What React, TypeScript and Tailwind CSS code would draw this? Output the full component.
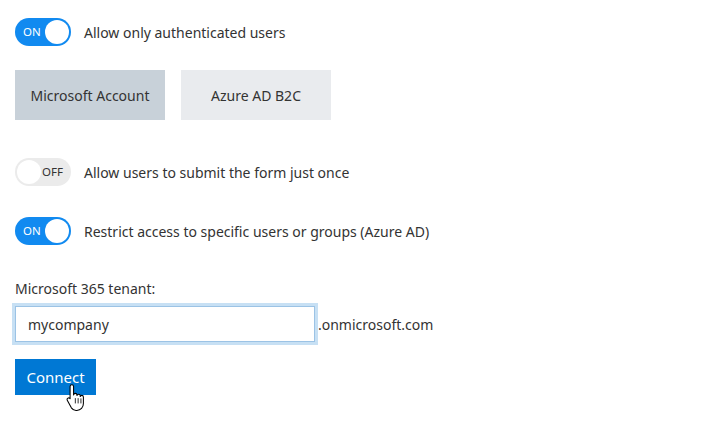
import React from 'react';

const font = { fontFamily: '"Segoe UI", "Noto Sans", "Open Sans", sans-serif' };

const Toggle = ({ on }: { on: boolean }) =>
    on ? (
        <div className="w-[56px] h-[28px] rounded-full bg-[#118af0] flex items-center justify-between pl-[8px] pr-[2px] shrink-0">
            <span className="text-[11.5px] text-white leading-none">ON</span>
            <span className="w-[24px] h-[24px] rounded-full bg-white"></span>
        </div>
    ) : (
        <div className="w-[56px] h-[28px] rounded-full bg-[#ebebeb] flex items-center justify-between pl-[2px] pr-[8px] shrink-0">
            <span className="w-[24px] h-[24px] rounded-full bg-white"></span>
            <span className="text-[11.5px] text-[#333] leading-none">OFF</span>
        </div>
    );

const Row = ({ on, label }: { on: boolean; label: string }) => (
    <div className="flex items-center gap-[13px]">
        <Toggle on={on} />
        <span className="text-[14px] text-[#333]">{label}</span>
    </div>
);

const HandCursor = () => (
    <svg width="21" height="28" viewBox="0 0 18 24" className="absolute left-[66px] top-[383px]">
        <path
            d="M5 1.5c.9 0 1.5.6 1.5 1.5v7.2c.2-.9.8-1.3 1.5-1.3.8 0 1.4.6 1.4 1.4v.4c.2-.7.8-1.1 1.4-1.1.8 0 1.4.6 1.4 1.4v.6c.2-.6.7-1 1.3-1 .8 0 1.4.6 1.4 1.4v5.5c0 3.5-2.3 6-5.6 6H8.6c-1.7 0-3-.8-4-2.2L1.2 15c-.5-.7-.3-1.6.4-2 .7-.4 1.5-.2 2 .4L3.5 13.5V3c0-.9.6-1.5 1.5-1.5z"
            fill="#fff"
            stroke="#000"
            strokeWidth="0.9"
            strokeLinejoin="round"
        />
        <path d="M8 13v4.5M10.4 13v4.5M12.8 13.2v4.3" stroke="#000" strokeWidth="0.7" />
    </svg>
);

export default function App() {
    return (
        <div className="relative w-[722px] h-[440px] bg-white" style={font}>
            <div className="pt-[18px] pl-[15px] flex flex-col">
                <Row on label="Allow only authenticated users" />
                <div className="flex gap-[16px] mt-[24px]">
                    <button className="w-[150px] h-[50px] bg-[#c8d1d9] text-[14px] text-[#333]">Microsoft Account</button>
                    <button className="w-[150px] h-[50px] bg-[#e9ebee] text-[14px] text-[#333]">Azure AD B2C</button>
                </div>
                <div className="mt-[38px]">
                    <Row on={false} label="Allow users to submit the form just once" />
                </div>
                <div className="mt-[31px]">
                    <Row on label="Restrict access to specific users or groups (Azure AD)" />
                </div>
                <div className="mt-[34px] text-[14px] text-[#333] leading-[20px]">Microsoft 365 tenant:</div>
                <div className="flex items-center mt-[7px]">
                    <input
                        readOnly
                        value="mycompany"
                        className="w-[300px] h-[36px] border border-[#9cc3e5] outline-[3px] outline-solid outline-[#c7e0f4] px-[12px] text-[14px] text-[#333]"
                        style={font}
                    />
                    <span className="ml-[3px] text-[14px] text-[#333]">.onmicrosoft.com</span>
                </div>
                <button className="mt-[17px] w-[81px] h-[36px] bg-[#0078d4] text-white text-[15px]">Connect</button>
            </div>
            <HandCursor />
        </div>
    );
}
